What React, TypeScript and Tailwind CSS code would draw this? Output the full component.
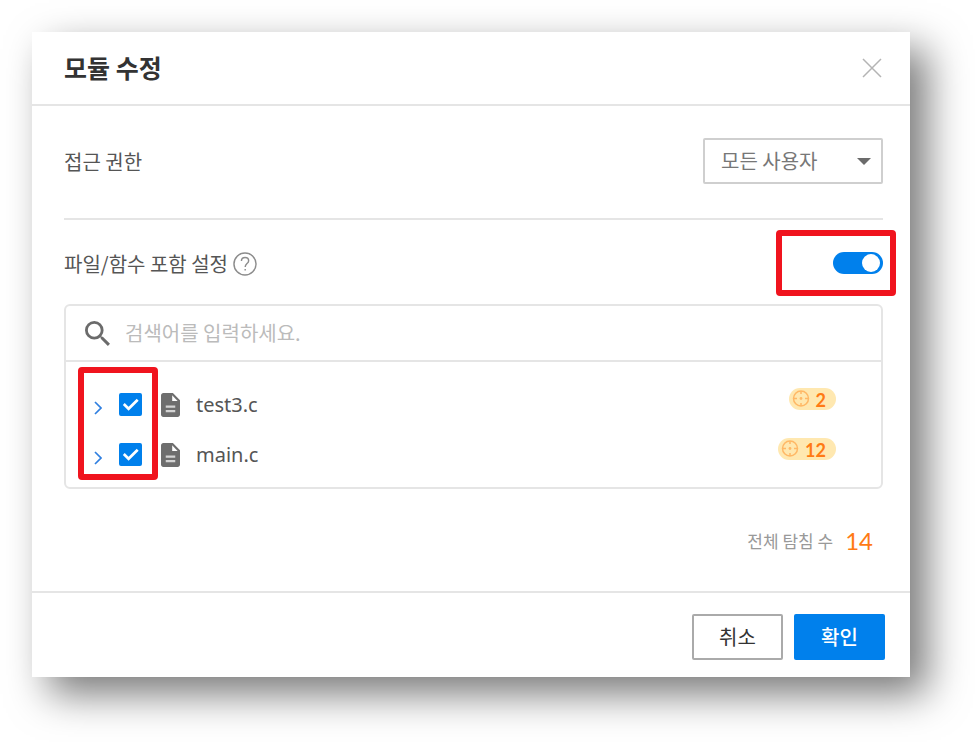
import React, { useState } from 'react';

interface FileItem {
    name: string;
    probes: number;
}

const files: FileItem[] = [
    { name: 'test3.c', probes: 2 },
    { name: 'main.c', probes: 12 },
];

const SearchIcon = () => (
    <svg className="size-[25px] shrink-0" viewBox="3 3 17.5 17.5" fill="#6b6b6b" aria-hidden="true">
        <path d="M15.5 14h-.79l-.28-.27A6.471 6.471 0 0 0 16 9.5 6.5 6.5 0 1 0 9.5 16c1.61 0 3.09-.59 4.23-1.57l.27.28v.79l5 4.99L20.49 19l-4.99-5zm-6 0C7.01 14 5 11.99 5 9.5S7.01 5 9.5 5 14 7.01 14 9.5 11.99 14 9.5 14z" />
    </svg>
);

const FileIcon = () => (
    <svg className="h-6 w-[19px] shrink-0" viewBox="4 2 16 20" preserveAspectRatio="none" aria-hidden="true">
        <path fill="#6e6e6e" d="M14 2H6c-1.1 0-1.99.9-1.99 2L4 20c0 1.1.89 2 1.99 2H18c1.1 0 2-.9 2-2V8l-6-6z" />
        <path fill="#fff" d="M13.4 3.9V8.6H18z" />
        <path fill="#d4d4d4" d="M8 12.4h8v1.8H8zM8 16.2h8V18H8z" />
    </svg>
);

const TargetIcon = () => (
    <svg className="size-[18px] shrink-0" viewBox="0 0 18 18" fill="none" stroke="#ffb866" strokeWidth="1.5" aria-hidden="true">
        <circle cx="9" cy="8.5" r="7.5" />
        <path d="M9 1v3M9 13v3M1.5 8.5h3.5M13 8.5h3.5" />
        <circle cx="9" cy="8.5" r="1.4" fill="#ffb866" stroke="none" />
    </svg>
);

const HelpIcon = () => (
    <svg className="size-6" viewBox="0 0 25 25" fill="none" stroke="#8c8c8c" strokeWidth="1.5" aria-hidden="true">
        <circle cx="12.5" cy="12.5" r="11.5" />
        <path d="M8.8 9.4c0-2.2 1.6-3.7 3.8-3.7s3.7 1.4 3.7 3.3c0 3-3.6 3.2-3.6 6.6" />
        <path d="M12.7 17.6v1.8" />
    </svg>
);

const FileRow: React.FC<{ file: FileItem }> = ({ file }) => {
    const [checked, setChecked] = useState(true);

    return (
        <li className="flex h-[50px] items-center pr-[45px] pl-5">
            <button type="button" aria-label={`${file.name} 펼치기`} className="mr-[9px] flex h-8 w-6 items-end justify-center pb-[5px]">
                <svg className="h-[14px] w-2" viewBox="0 0 8 14" fill="none" stroke="#2f7fe0" strokeWidth="1.7" aria-hidden="true">
                    <path d="M1 1l6 6-6 6" />
                </svg>
            </button>
            <span className="relative mr-[19px] flex">
                <input
                    id={file.name}
                    type="checkbox"
                    checked={checked}
                    onChange={(e) => setChecked(e.target.checked)}
                    className="peer size-[23px] appearance-none rounded-xs border-2 border-[#c4c4c4] checked:border-[#0080ec] checked:bg-[#0080ec]"
                />
                <svg className="pointer-events-none absolute inset-0 hidden size-[23px] peer-checked:block" viewBox="0 0 24 24" fill="none" stroke="#fff" strokeWidth="2.8" aria-hidden="true">
                    <path d="M5 11.5l5 5 9.5-9.5" />
                </svg>
            </span>
            <label htmlFor={file.name} className="flex items-center gap-4 pt-[2px] font-['Noto_Sans','Noto_Sans_CJK_KR',sans-serif] text-xl text-[#555]">
                <FileIcon />
                {file.name}
            </label>
            <span className="mt-[9px] ml-auto flex h-[22px] items-center gap-[6px] self-start rounded-full bg-[#ffe8b0] pr-[10px] pl-[3px] font-[Lato] text-lg font-bold text-[#ff7a14]">
                <TargetIcon />
                <span className="pt-[2px]">{file.probes}</span>
            </span>
        </li>
    );
};

const App: React.FC = () => {
    const [included, setIncluded] = useState(true);
    const total = files.reduce((sum, f) => sum + f.probes, 0);

    return (
        <div className="min-h-screen bg-white pt-8 pr-[65px] pb-16 pl-8 font-['Noto_Sans_CJK_KR',sans-serif] text-xl text-[#555]">
            <section role="dialog" aria-labelledby="title" className="bg-white shadow-[17px_17px_38px_rgba(0,0,0,0.53)]">
                <header className="flex h-[74px] items-center justify-between border-b-2 border-[#e5e5e5] pr-7 pl-8">
                    <h1 id="title" className="pb-[2px] text-[25px] leading-8 font-bold text-[#333]">모듈 수정</h1>
                    <button type="button" aria-label="닫기">
                        <svg className="size-5" viewBox="0 0 20 20" stroke="#b4b4b4" strokeWidth="1.5" aria-hidden="true">
                            <path d="M1 1l18 18M19 1L1 19" />
                        </svg>
                    </button>
                </header>

                <div className="pt-8 pr-[27px] pl-8">
                    <div className="flex items-center justify-between border-b-2 border-[#e5e5e5] pb-[34px]">
                        <label htmlFor="access" className="pt-[2px]">접근 권한</label>
                        <div className="relative">
                            <select id="access" className="h-[46px] w-[180px] appearance-none rounded-xs border-2 border-[#cfcfcf] bg-white pl-4 text-[#777]">
                                <option>모든 사용자</option>
                            </select>
                            <svg className="pointer-events-none absolute top-5 right-3 h-[7px] w-[14px]" viewBox="0 0 14 7" fill="#6b6b6b" aria-hidden="true">
                                <path d="M0 0h14L7 7z" />
                            </svg>
                        </div>
                    </div>

                    <div className="flex h-[84px] items-center justify-between pt-[2px]">
                        <div className="flex items-center gap-[5px] pt-[2px]">
                            <label htmlFor="include">파일/함수 포함 설정</label>
                            <button type="button" aria-label="도움말">
                                <HelpIcon />
                            </button>
                        </div>
                        <div className="relative flex">
                            <input
                                id="include"
                                type="checkbox"
                                role="switch"
                                checked={included}
                                onChange={(e) => setIncluded(e.target.checked)}
                                className="flex h-[22px] w-[50px] appearance-none items-center rounded-full bg-[#c4c4c4] px-[3px] before:size-[18px] before:rounded-full before:bg-white checked:justify-end checked:bg-[#0080ec]"
                            />
                            <div className="pointer-events-none absolute -top-[22px] -right-[13px] h-[66px] w-[120px] rounded-sm border-6 border-[#f0141e]" />
                        </div>
                    </div>

                    <div className="rounded-md border-2 border-[#e5e5e5]">
                        <label className="flex h-[56px] items-center gap-[15px] border-b-2 border-[#e5e5e5] pl-[19px]">
                            <SearchIcon />
                            <input type="text" aria-label="검색" placeholder="검색어를 입력하세요." className="w-full outline-none placeholder:text-[#bbb]" />
                        </label>
                        <div className="relative pt-[17px] pb-2">
                            <ul>
                                {files.map((file) => (
                                    <FileRow key={file.name} file={file} />
                                ))}
                            </ul>
                            <div className="pointer-events-none absolute top-[5px] left-3 h-[113px] w-20 rounded-sm border-6 border-[#f0141e]" />
                        </div>
                    </div>

                    <p className="flex h-[102px] items-center justify-end gap-3 pt-[2px] pr-[10px] text-[17px] text-[#999]">
                        전체 탐침 수
                        <strong className="font-[Lato] text-2xl font-normal text-[#ff7a14]">{total}</strong>
                    </p>
                </div>

                <footer className="flex justify-end gap-[11px] border-t-2 border-[#e5e5e5] pt-[21px] pr-[25px] pb-[17px]">
                    <button type="button" className="h-[46px] w-[91px] rounded-xs border-2 border-[#aaa] bg-white text-[#333]">취소</button>
                    <button type="button" className="h-[46px] w-[91px] rounded-xs bg-[#0080ec] font-medium text-white">확인</button>
                </footer>
            </section>
        </div>
    );
};

export default App;
